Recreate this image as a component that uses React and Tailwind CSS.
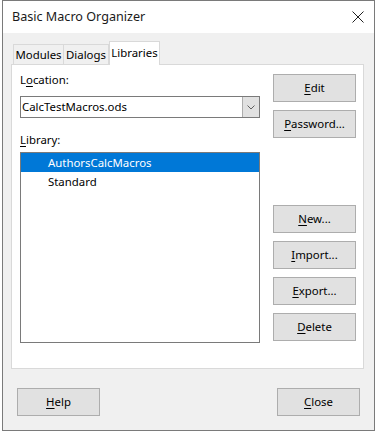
import React from "react";

const font = { fontFamily: '"Noto Sans", "Segoe UI", sans-serif' };

const Btn = ({ label, u, rest, className = "" }) => (
  <button
    className={`h-[28px] w-[83px] border border-[#adadad] bg-[#e1e1e1] text-[11.4px] text-black leading-none ${className}`}
  >
    {label}
    <span className="underline underline-offset-2">{u}</span>
    {rest}
  </button>
);

const App = () => {
  return (
    <div className="h-[432px] w-[376px] bg-white pl-[2px]" style={font}>
      <div className="flex h-[431px] w-[373px] flex-col border border-[#7a7a7a] bg-[#f0f0f0]">
        {/* title bar */}
        <div className="flex h-[32px] items-center justify-between bg-white pl-[9px] pr-[10px]">
          <span className="text-[12.6px] text-[#1a1a1a]">Basic Macro Organizer</span>
          <svg width="12" height="12" viewBox="0 0 12 12" className="mb-[1px]">
            <path d="M0.5 0.5 L11.5 11.5 M11.5 0.5 L0.5 11.5" stroke="#222" strokeWidth="1" />
          </svg>
        </div>

        {/* tabs */}
        <div className="ml-[10px] mt-[8px] flex h-[23px] items-end text-[11.4px] text-black">
          <div className="flex h-[20px] w-[51px] items-center justify-center border border-b-0 border-[#d9d9d9]">Modules</div>
          <div className="flex h-[20px] w-[45px] items-center justify-center border border-b-0 border-l-0 border-[#d9d9d9]">Dialogs</div>
          <div className="relative z-10 -mb-px flex h-[24px] w-[51px] items-center justify-center border border-b-0 border-[#d9d9d9] bg-white pb-[2px]">Libraries</div>
        </div>

        {/* panel */}
        <div className="ml-[8px] flex h-[305px] w-[353px] border border-[#d9d9d9] bg-white pl-[8px] pt-[7px] text-[11.4px] text-black">
          <div className="flex w-[240px] flex-col">
            <div className="h-[16px] leading-[16px]">
              L<span className="underline underline-offset-2">o</span>cation:
            </div>
            <div className="mt-[8px] flex h-[22px] border border-[#7a7a7a]">
              <div className="flex flex-1 items-center pl-[1px]">CalcTestMacros.ods</div>
              <div className="flex w-[17px] items-center justify-center border-l border-[#adadad] bg-[#e1e1e1]">
                <svg width="8" height="5" viewBox="0 0 8 5">
                  <path d="M0.5 0.5 L4 4 L7.5 0.5" stroke="#606060" strokeWidth="1" fill="none" />
                </svg>
              </div>
            </div>
            <div className="mt-[14px] h-[16px] leading-[16px]">
              <span className="underline underline-offset-2">L</span>ibrary:
            </div>
            <div className="mt-[4px] flex h-[191px] flex-col border border-[#7a7a7a] p-0">
              <div className="flex h-[19px] items-center bg-[#0078d7] pl-[27px] text-white">AuthorsCalcMacros</div>
              <div className="flex h-[19px] items-center pl-[27px]">Standard</div>
            </div>
          </div>
          <div className="ml-[13px] flex flex-col pt-[2px]">
            <Btn u="E" rest="dit" />
            <Btn u="P" rest="assword..." className="mt-[8px]" />
            <Btn u="N" rest="ew..." className="mt-[67px]" />
            <Btn u="I" rest="mport..." className="mt-[8px]" />
            <Btn u="E" rest="xport..." className="mt-[8px]" />
            <Btn u="D" rest="elete" className="mt-[8px]" />
          </div>
        </div>

        {/* footer */}
        <div className="mt-[19px] flex justify-between pl-[14px] pr-[14px]">
          <Btn u="H" rest="elp" />
          <Btn u="C" rest="lose" />
        </div>
      </div>
    </div>
  );
};

export default App;
